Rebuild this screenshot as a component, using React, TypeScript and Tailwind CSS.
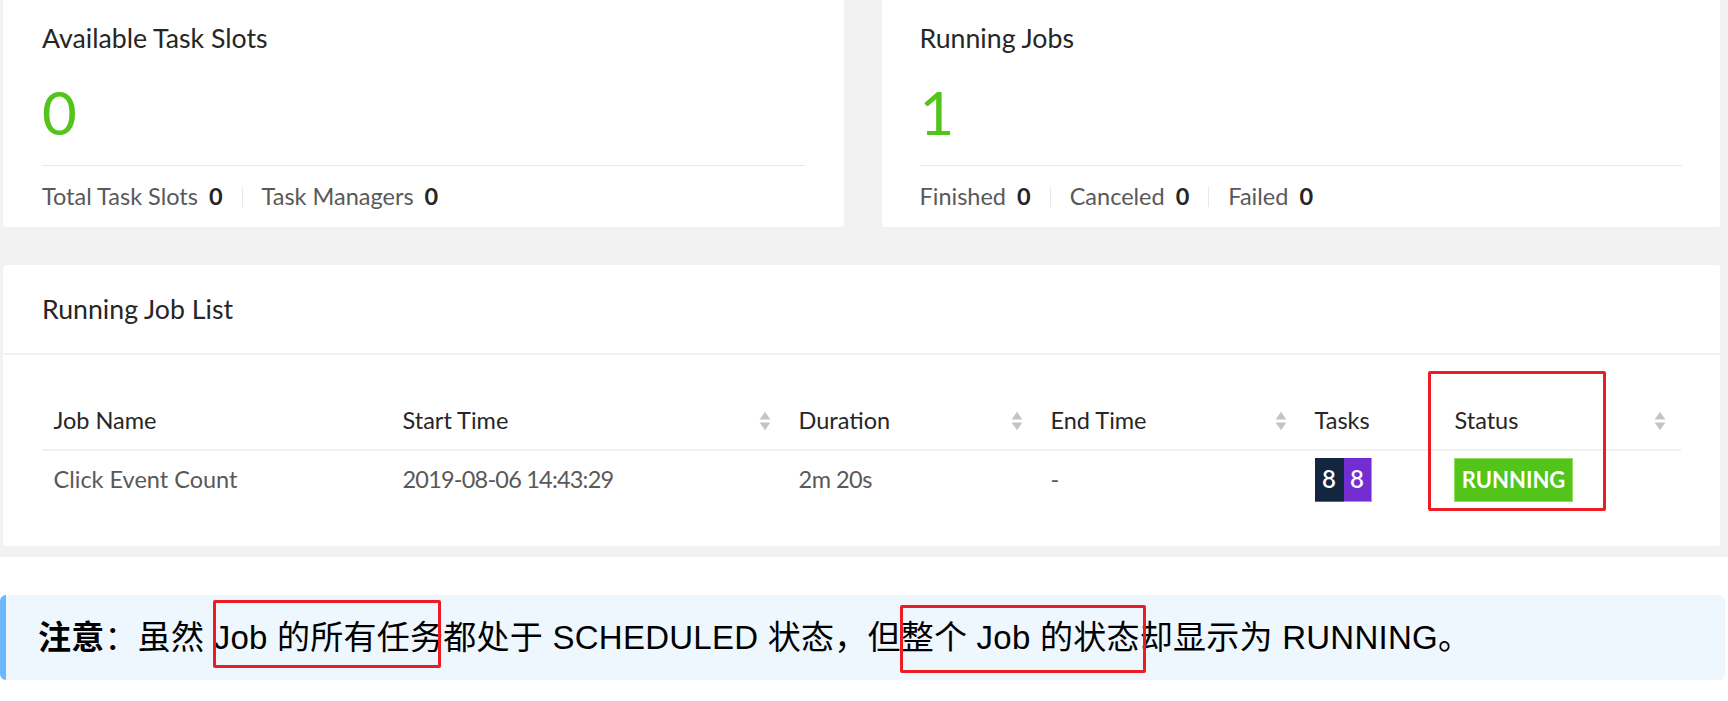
import React from "react";

const SortIcon = () => (
  <svg width="12" height="20" viewBox="0 0 12 20" className="shrink-0">
    <path d="M6 0.8 L11.4 8.6 L0.6 8.6 Z" fill="#c4c4c4" />
    <path d="M0.6 11.4 L11.4 11.4 L6 19.2 Z" fill="#c4c4c4" />
  </svg>
);

const Sep = () => <span className="mx-[19px] inline-block h-[20px] w-px bg-[#e8e8e8]" />;

const Stat = ({ label, value }: { label: string; value: string }) => (
  <span className="flex items-center">
    <span className="text-[#595959]">{label}</span>
    <span className="ml-[11px] font-bold text-[#262626]">{value}</span>
  </span>
);

export default function App() {
  return (
    <div className="relative h-[701px] w-[1728px] overflow-hidden bg-white">
      {/* Dashboard screenshot area */}
      <div className="h-[557px] bg-[#f2f2f2] pl-[3px] pr-[8px] font-['Lato',sans-serif]">
        <div className="flex gap-[38px]">
          {/* Card 1 */}
          <div className="flex h-[227px] flex-1 flex-col rounded-b-[3px] bg-white px-[39px] pt-[18px]">
            <div className="h-[40px] text-[26.7px] leading-[40px] text-[#262626]">Available Task Slots</div>
            <div className="flex h-[107px] items-center text-[60px] leading-none text-[#52c41a]">0</div>
            <div className="h-px bg-[#e8e8e8]" />
            <div className="flex flex-1 items-center text-[23.5px] leading-none">
              <Stat label="Total Task Slots" value="0" />
              <Sep />
              <Stat label="Task Managers" value="0" />
            </div>
          </div>
          {/* Card 2 */}
          <div className="flex h-[227px] flex-1 flex-col rounded-b-[3px] bg-white px-[38px] pt-[18px]">
            <div className="h-[40px] text-[26.7px] leading-[40px] text-[#262626]">Running Jobs</div>
            <div className="flex h-[107px] items-center text-[60px] leading-none text-[#52c41a]">1</div>
            <div className="h-px bg-[#e8e8e8]" />
            <div className="flex flex-1 items-center text-[23.5px] leading-none">
              <Stat label="Finished" value="0" />
              <Sep />
              <Stat label="Canceled" value="0" />
              <Sep />
              <Stat label="Failed" value="0" />
            </div>
          </div>
        </div>

        {/* Running Job List */}
        <div className="mt-[38px] h-[281px] rounded-[3px] bg-white">
          <div className="flex h-[90px] items-center border-b-2 border-[#f0f0f0] px-[39px] text-[26.7px] text-[#262626]">
            Running Job List
          </div>
          <div className="px-[39px] pt-[37.5px]">
            <div className="grid grid-cols-[349px_396px_252px_264px_140px_1fr] text-[23.5px] leading-none">
              {/* header */}
              <div className="flex h-[58px] items-center border-b-2 border-[#f0f0f0] pl-[11.5px] text-[#262626]">Job Name</div>
              <div className="flex h-[58px] items-center justify-between border-b-2 border-[#f0f0f0] pl-[11.5px] pr-[16px] text-[#262626]">
                <span>Start Time</span>
                <SortIcon />
              </div>
              <div className="flex h-[58px] items-center justify-between border-b-2 border-[#f0f0f0] pl-[11.5px] pr-[16px] text-[#262626]">
                <span>Duration</span>
                <SortIcon />
              </div>
              <div className="flex h-[58px] items-center justify-between border-b-2 border-[#f0f0f0] pl-[11.5px] pr-[16px] text-[#262626]">
                <span>End Time</span>
                <SortIcon />
              </div>
              <div className="flex h-[58px] items-center border-b-2 border-[#f0f0f0] pl-[11.5px] text-[#262626]">Tasks</div>
              <div className="flex h-[58px] items-center justify-between border-b-2 border-[#f0f0f0] pl-[11.5px] pr-[15px] text-[#262626]">
                <span>Status</span>
                <SortIcon />
              </div>
              {/* row */}
              <div className="flex h-[58px] items-center pl-[11.5px] text-[#595959]">Click Event Count</div>
              <div className="flex h-[58px] items-center pl-[11.5px] tracking-[-0.8px] text-[#595959]">2019-08-06 14:43:29</div>
              <div className="flex h-[58px] items-center pl-[11.5px] tracking-[-0.5px] text-[#595959]">2m 20s</div>
              <div className="flex h-[58px] items-center pl-[11.5px] text-[#595959]">-</div>
              <div className="flex h-[58px] items-center pl-[11.5px]">
                <span className="flex h-[44px] w-[29px] items-center justify-center border-b border-[#5a6578] bg-[#132640] text-[24px] font-semibold text-white">8</span>
                <span className="flex h-[44px] w-[28px] items-center justify-center border-b border-r border-[#b38be8] bg-[#722ed1] text-[24px] font-semibold text-white">8</span>
              </div>
              <div className="flex h-[58px] items-center pl-[11px]">
                <span className="flex h-[44px] w-[119px] items-center justify-center border border-[#95de64] bg-[#52c41a] text-[22px] font-bold text-white">
                  RUNNING
                </span>
              </div>
            </div>
          </div>
        </div>
      </div>

      {/* Callout */}
      <div className="mr-[3px] mt-[38px] flex h-[85px] items-center rounded-[6px] border-l-[6px] border-[#6cb8fc] bg-[#eef6fe] pl-[32px] font-['Liberation_Sans','Noto_Sans_CJK_SC',sans-serif] text-[33px] tracking-[0.25px] text-black">
        <span>
          <b>注意</b>：虽然 Job 的所有任务都处于 SCHEDULED 状态，但整个 Job 的状态却显示为 RUNNING。
        </span>
      </div>

      {/* Red annotation boxes */}
      <div className="pointer-events-none absolute left-[1428px] top-[371px] h-[140px] w-[178px] rounded-[2px] border-[3px] border-[#ec1c24]" />
      <div className="pointer-events-none absolute left-[213px] top-[600px] h-[68px] w-[228px] rounded-[2px] border-[3px] border-[#ec1c24]" />
      <div className="pointer-events-none absolute left-[900px] top-[605px] h-[68px] w-[246px] rounded-[2px] border-[3px] border-[#ec1c24]" />
    </div>
  );
}
